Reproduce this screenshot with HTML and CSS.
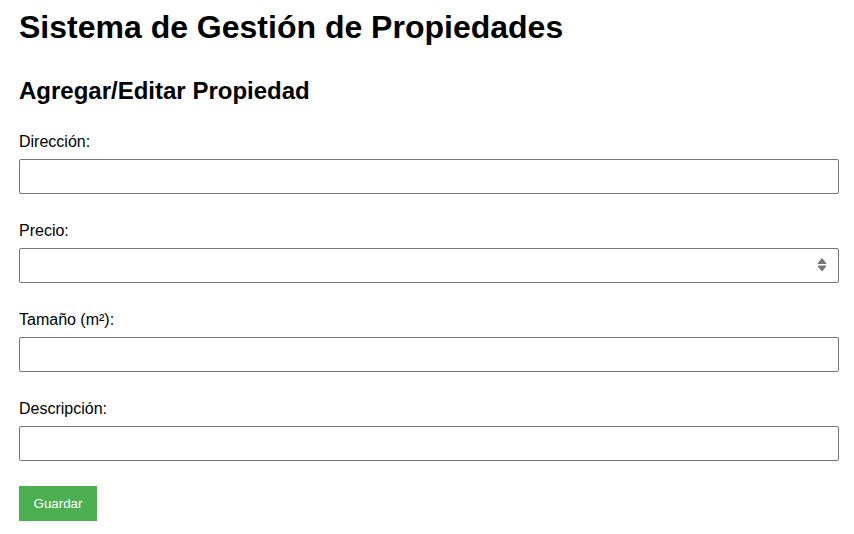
FILE: index.html
```html
<!DOCTYPE html>
<html lang="es">
<head>
<meta charset="utf-8">
<title>Sistema de Gestión de Propiedades</title>
<link rel="stylesheet" href="styles.css">
</head>
<body>
<div class="page">
  <h1 class="title">Sistema de Gestión de Propiedades</h1>
  <h2 class="subtitle">Agregar/Editar Propiedad</h2>
  <form class="form">
    <div class="field">
      <label class="label" for="direccion">Dirección:</label>
      <input class="input" id="direccion" type="text">
    </div>
    <div class="field">
      <label class="label" for="precio">Precio:</label>
      <div class="input-wrap">
        <input class="input" id="precio" type="text">
        <svg class="spinner" width="10" height="16" viewBox="0 0 10 16" aria-hidden="true">
          <path d="M1 6.5 L5 1.5 L9 6.5 Z" fill="#767676" stroke="#767676" stroke-width="1" stroke-linejoin="round"/>
          <path d="M1 9 L9 9 L5 14 Z" fill="#767676" stroke="#767676" stroke-width="1" stroke-linejoin="round"/>
        </svg>
      </div>
    </div>
    <div class="field">
      <label class="label" for="tamano">Tamaño (m²):</label>
      <input class="input" id="tamano" type="text">
    </div>
    <div class="field">
      <label class="label" for="descripcion">Descripción:</label>
      <input class="input" id="descripcion" type="text">
    </div>
    <div class="actions">
      <button class="btn" type="button">Guardar</button>
    </div>
  </form>
</div>
</body>
</html>
```

FILE: styles.css
```css
html, body {
  margin: 0;
  padding: 0;
  background: #ffffff;
}

body {
  font-family: "Liberation Sans", Arial, sans-serif;
  color: #000000;
}

.page {
  padding: 9px 15px 0 19px;
}

.title {
  margin: 0;
  font-size: 32px;
  line-height: 37px;
  font-weight: bold;
}

.subtitle {
  margin: 31px 0 0 0;
  font-size: 24px;
  line-height: 28px;
  font-weight: bold;
}

.form {
  margin-top: 27px;
  display: flex;
  flex-direction: column;
  gap: 27px;
}

.field {
  display: flex;
  flex-direction: column;
}

.label {
  display: block;
  font-size: 16px;
  line-height: 18px;
  padding-top: 1px;
  margin-bottom: 8px;
}

.input-wrap {
  position: relative;
}

.input {
  box-sizing: border-box;
  width: 100%;
  height: 35px;
  margin: 0;
  padding: 0 8px;
  border: 1px solid #767676;
  border-radius: 2px;
  background: #ffffff;
  font-family: "Liberation Sans", Arial, sans-serif;
  font-size: 16px;
  outline: none;
}

.spinner {
  position: absolute;
  right: 12px;
  top: 9px;
}

.actions {
  margin-top: -2px;
}

.btn {
  box-sizing: border-box;
  width: 78px;
  height: 35px;
  padding: 0;
  border: none;
  border-radius: 0;
  background: #4caf50;
  color: #ffffff;
  font-family: "Liberation Sans", Arial, sans-serif;
  font-size: 13.333px;
  cursor: pointer;
}
```
